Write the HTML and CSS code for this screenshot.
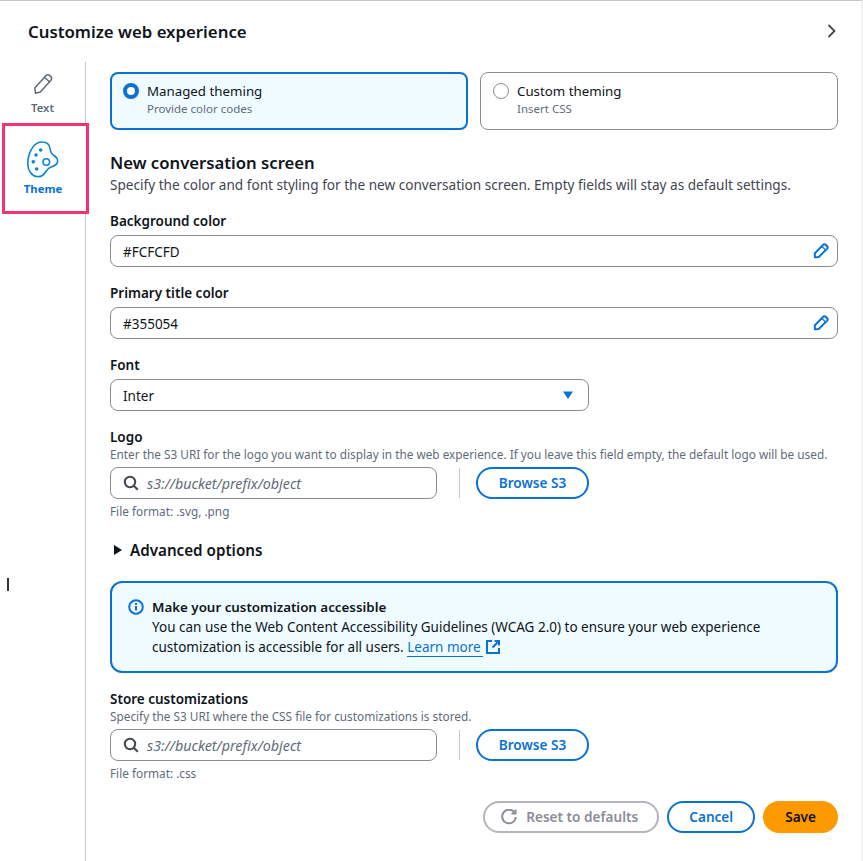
FILE: index.html
```html
<!DOCTYPE html>
<html lang="en">
<head>
<meta charset="utf-8">
<title>Customize web experience</title>
<link rel="stylesheet" href="styles.css">
</head>
<body>
<div class="panel">
  <header class="head">
    <h1>Customize web experience</h1>
    <svg class="chev" width="16" height="16" viewBox="0 0 16 16"><path d="M6.500 2 12.500 8 6.500 14" fill="none" stroke="#424650" stroke-width="1.800"/></svg>
  </header>
  <div class="body">
    <nav class="side">
      <div class="tab">
        <svg class="tab-icon" width="24" height="24" viewBox="0 0 24 24" fill="none" stroke="#5f6b7a" stroke-width="1.500" stroke-linejoin="round"><path d="M4.500 21.200 3.800 16 15 3.600c1-1.100 2.600-1.100 3.800 0l1 1c1.100 1.100 1.100 2.600.1 3.700L9.300 20z"/><path d="M13.500 5.300l5.400 5"/></svg>
        <span>Text</span>
      </div>
      <div class="tab active">
        <svg class="tab-icon" width="34" height="38" viewBox="0 0 34 38" fill="none" stroke="#0a84d6" stroke-width="1.600"><path d="M14.500 2C18.500 1.800 23.500 3 24 8.500 24.300 12 25 13.500 28 15.500 31 17.500 32 19.500 31.500 22 31 24.500 28 26 25 27 22.500 28 21 29.500 19.500 32 17.500 35.500 14.500 37 11 36.500 6 36 2 31 1.800 24 1.600 14 7 3 14.500 2Z"/><circle cx="20.300" cy="22" r="3.300"/><g fill="#0a84d6" stroke="none"><circle cx="14.700" cy="10" r="1.800"/><circle cx="10" cy="15" r="1.800"/><circle cx="7.300" cy="21.700" r="1.800"/><circle cx="10.700" cy="29" r="1.800"/></g></svg>
        <span>Theme</span>
      </div>
    </nav>
    <main class="main">
      <div class="tiles">
        <div class="tile selected">
          <span class="radio on"></span>
          <div><div class="tile-title">Managed theming</div><div class="tile-sub">Provide color codes</div></div>
        </div>
        <div class="tile">
          <span class="radio"></span>
          <div><div class="tile-title">Custom theming</div><div class="tile-sub">Insert CSS</div></div>
        </div>
      </div>

      <h2 class="section">New conversation screen</h2>
      <p class="section-desc">Specify the color and font styling for the new conversation screen. Empty fields will stay as default settings.</p>

      <label class="label first">Background color</label>
      <div class="input">
        <span>#FCFCFD</span>
        <svg class="pen" width="16" height="16" viewBox="0 0 16 16" fill="none" stroke="#0972d3" stroke-width="2" stroke-linejoin="round"><path d="M2 14.300 1.700 10.500 10 2c.9-.9 2.200-.9 3 0l1 1c.8.900.8 2 0 2.900L5.700 14z"/><path d="M9 3.500l3.500 3.500" stroke-width="1.300"/></svg>
      </div>

      <label class="label">Primary title color</label>
      <div class="input">
        <span>#355054</span>
        <svg class="pen" width="16" height="16" viewBox="0 0 16 16" fill="none" stroke="#0972d3" stroke-width="2" stroke-linejoin="round"><path d="M2 14.300 1.700 10.500 10 2c.9-.9 2.200-.9 3 0l1 1c.8.900.8 2 0 2.900L5.700 14z"/><path d="M9 3.500l3.500 3.500" stroke-width="1.300"/></svg>
      </div>

      <label class="label">Font</label>
      <div class="input select">
        <span>Inter</span>
        <svg class="caret" width="12" height="10" viewBox="0 0 12 10"><path d="M1 1.500h10L6 9z" fill="#0972d3"/></svg>
      </div>

      <label class="label logo-label">Logo</label>
      <p class="hint">Enter the S3 URI for the logo you want to display in the web experience. If you leave this field empty, the default logo will be used.</p>
      <div class="s3-row">
        <div class="input search">
          <svg width="16" height="16" viewBox="0 0 16 16" fill="none" stroke="#424650" stroke-width="2"><circle cx="7" cy="7" r="5.200"/><path d="m10.800 10.800 4 4"/></svg>
          <span class="placeholder">s3://bucket/prefix/object</span>
        </div>
        <span class="divider"></span>
        <button class="btn">Browse S3</button>
      </div>
      <p class="format">File format: .svg, .png</p>

      <div class="advanced">
        <svg width="10" height="12" viewBox="0 0 10 12"><path d="M1 1l8 5-8 5z" fill="#0f141a"/></svg>
        <span>Advanced options</span>
      </div>

      <div class="alert">
        <svg class="info" width="16" height="16" viewBox="0 0 16 16" fill="none" stroke="#0972d3" stroke-width="2"><circle cx="8" cy="8" r="6.800"/><path d="M8 7v4.500M8 4v2"/></svg>
        <div>
          <div class="alert-title">Make your customization accessible</div>
          <div class="alert-text">You can use the Web Content Accessibility Guidelines (WCAG 2.0) to ensure your web experience customization is accessible for all users. <a class="link">Learn more</a><svg class="ext" width="16" height="16" viewBox="0 0 16 16" fill="none" stroke="#0972d3" stroke-width="2"><path d="M7 2H2v12h12V9"/><path d="M9.500 2H14v4.500M14 2 7.500 8.500"/></svg></div>
        </div>
      </div>

      <label class="label store-label">Store customizations</label>
      <p class="hint">Specify the S3 URI where the CSS file for customizations is stored.</p>
      <div class="s3-row">
        <div class="input search">
          <svg width="16" height="16" viewBox="0 0 16 16" fill="none" stroke="#424650" stroke-width="2"><circle cx="7" cy="7" r="5.200"/><path d="m10.800 10.800 4 4"/></svg>
          <span class="placeholder">s3://bucket/prefix/object</span>
        </div>
        <span class="divider"></span>
        <button class="btn">Browse S3</button>
      </div>
      <p class="format">File format: .css</p>

      <div class="actions">
        <button class="btn disabled"><svg width="16" height="16" viewBox="0 0 16 16" fill="none" stroke="#8c8c94" stroke-width="2"><path d="M13.500 3.500A6.800 6.800 0 1 0 14.800 8"/><path d="M14.500 0.500v4h-4"/></svg>Reset to defaults</button>
        <button class="btn">Cancel</button>
        <button class="btn primary">Save</button>
      </div>
    </main>
  </div>
  <span class="cursor"></span>
</div>
</body>
</html>
```
FILE: styles.css
```css
* { box-sizing: border-box; }
html, body { margin: 0; height: 100%; }
body {
  background: #fff;
  color: #0f141a;
  font-family: "Noto Sans", "Open Sans", sans-serif;
  font-size: 14px;
  overflow: hidden;
}
.panel {
  position: relative;
  height: 861px;
  border-top: 1px solid #c6c6cd;
  border-right: 2px solid #f3f3f7;
  display: flex;
  flex-direction: column;
}
.head {
  height: 61px;
  padding: 17px 23px 0 28px;
  display: flex;
  justify-content: space-between;
  align-items: flex-start;
}
.head h1 { margin: 0; font-size: 16.800px; line-height: 27px; font-weight: 600; }
.chev { margin-top: 5px; }
.body { flex: 1; display: flex; min-height: 0; }
.side {
  width: 86px;
  flex: none;
  border-right: 1px solid #c6c6cd;
  position: relative;
}
.tab {
  display: flex;
  flex-direction: column;
  align-items: center;
  color: #5f6b7a;
  font-size: 11.300px;
  font-weight: 600;
  line-height: 14px;
  height: 61px;
  padding-top: 10px;
}
.tab-icon { margin-bottom: 5px; }
.tab.active {
  position: absolute;
  left: 2px;
  top: 61px;
  width: 87px;
  height: 91px;
  padding: 14px 5px 0 0;
  background: #fff;
  border: 3px solid #f5346f;
  color: #0972d3;
  font-weight: 700;
  z-index: 1;
}
.tab.active .tab-icon { margin-bottom: 4px; }
.main { flex: 1; padding: 10px 23px 0 24px; min-width: 0; }
.tiles { display: flex; gap: 12px; }
.tile {
  flex: 1;
  height: 58px;
  border: 1px solid #8c8c94;
  border-radius: 8px;
  padding: 8px 12px;
  display: flex;
  gap: 8px;
}
.tile.selected {
  background: #f0fbff;
  border: 2px solid #0972d3;
  padding: 7px 11px;
}
.radio {
  width: 16px;
  height: 16px;
  flex: none;
  margin-top: 2px;
  border: 1px solid #8c8c94;
  border-radius: 50%;
  background: #fff;
}
.radio.on { border: 4.500px solid #0972d3; }
.tile-title { font-size: 13.300px; line-height: 20px; }
.tile-sub { font-size: 11.500px; line-height: 16px; color: #5f6b7a; }
.section { margin: 21px 0 0; font-size: 16.700px; line-height: 24px; font-weight: 600; }
.section-desc { margin: 0; font-size: 13.600px; line-height: 20px; color: #424650; white-space: nowrap; }
.label { display: block; font-size: 13.500px; line-height: 18px; font-weight: 600; margin: 17px 0 5px; }
.input {
  height: 32px;
  border: 1px solid #8c8c94;
  border-radius: 8px;
  padding: 0 8px 0 12px;
  display: flex;
  align-items: center;
  justify-content: space-between;
  font-size: 13.500px;
  background: #fff;
}
.input > span { padding-top: 1px; }
.select { width: 479px; padding-right: 14px; }
.logo-label { margin: 17px 0 0; }
.hint { margin: 0 0 5px; font-size: 11.800px; line-height: 16px; color: #5f6b7a; white-space: nowrap; }
.s3-row { display: flex; align-items: center; }
.search { width: 327px; justify-content: flex-start; gap: 8px; padding-left: 12px; }
.placeholder { font-style: italic; color: #5f6b7a; font-size: 14.300px; }
.divider { width: 1px; height: 30px; background: #c6c6cd; margin: 0 16px 0 22px; }
.btn {
  height: 32px;
  padding: 0 20px;
  border: 2px solid #0972d3;
  border-radius: 20px;
  background: #fff;
  color: #0972d3;
  font: 600 13.600px/1 "Noto Sans", "Open Sans", sans-serif;
  display: inline-flex;
  align-items: center;
  gap: 9px;
}
.s3-row .btn { width: 113px; padding: 0; justify-content: center; }
.format { margin: 4px 0 0; font-size: 11.800px; line-height: 16px; color: #5f6b7a; }
.advanced {
  margin-top: 20px;
  display: flex;
  align-items: center;
  gap: 7px;
  font-size: 15.200px;
  line-height: 22px;
  font-weight: 600;
  padding-left: 3px;
}
.alert {
  margin-top: 20px;
  height: 92px;
  border: 2px solid #0972d3;
  border-radius: 12px;
  background: #f0fbff;
  padding: 14px 16px 0;
  display: flex;
  gap: 8px;
}
.info { flex: none; margin-top: 2px; }
.alert-title { font-size: 13.350px; line-height: 20px; font-weight: 600; }
.alert-text { font-size: 13.500px; line-height: 20px; }
.link { color: #0972d3; border-bottom: 1px solid #0972d3; padding-right: 2px; }
.ext { vertical-align: -3px; margin-left: 2px; }
.store-label { margin: 17px 0 0; }
.actions { display: flex; justify-content: flex-end; gap: 8px; margin-top: 20px; }
.actions .btn { padding: 0 20px; }
.actions .btn.disabled { border-color: #b4b4bb; color: #8c8c94; padding: 0 19px 0 16px; }
.btn.primary { background: #ff9900; border-color: #ff9900; color: #0f141a; }
.cursor { position: absolute; left: 7px; top: 577px; width: 2px; height: 13px; background: #333; }
```
